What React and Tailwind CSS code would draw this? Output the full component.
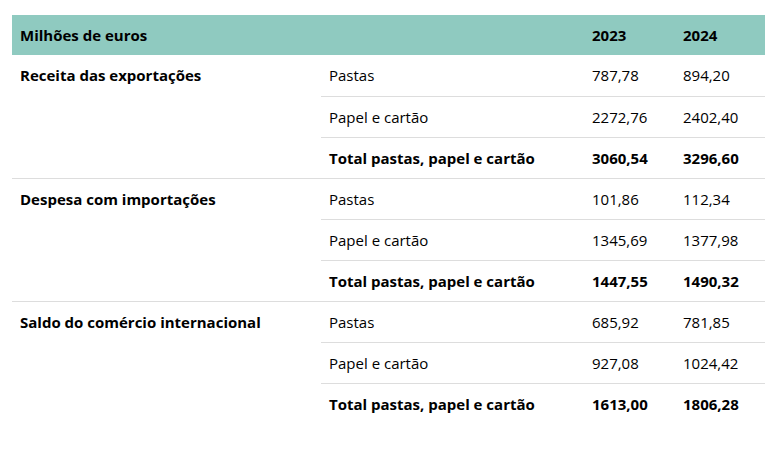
import React from "react";

const groups = [
  {
    label: "Receita das exportações",
    rows: [
      ["Pastas", "787,78", "894,20"],
      ["Papel e cartão", "2272,76", "2402,40"],
      ["Total pastas, papel e cartão", "3060,54", "3296,60"],
    ],
  },
  {
    label: "Despesa com importações",
    rows: [
      ["Pastas", "101,86", "112,34"],
      ["Papel e cartão", "1345,69", "1377,98"],
      ["Total pastas, papel e cartão", "1447,55", "1490,32"],
    ],
  },
  {
    label: "Saldo do comércio internacional",
    rows: [
      ["Pastas", "685,92", "781,85"],
      ["Papel e cartão", "927,08", "1024,42"],
      ["Total pastas, papel e cartão", "1613,00", "1806,28"],
    ],
  },
];

export default function App() {
  return (
    <div
      className="bg-white w-[776px] h-[451px] pt-[15px] pl-[12px] text-black"
      style={{ fontFamily: '"Open Sans", "Noto Sans", sans-serif' }}
    >
      <table className="w-[753px] border-collapse text-[15px] leading-[20px] table-fixed">
        <colgroup>
          <col className="w-[309px]" />
          <col className="w-[263px]" />
          <col className="w-[91px]" />
          <col className="w-[90px]" />
        </colgroup>
        <thead>
          <tr className="bg-[#8fcac0] h-[40px]">
            <th className="text-left font-bold px-2 align-middle">Milhões de euros</th>
            <th></th>
            <th className="text-left font-bold px-2 align-middle">2023</th>
            <th className="text-left font-bold px-2 align-middle">2024</th>
          </tr>
        </thead>
        <tbody>
          {groups.map((g, gi) =>
            g.rows.map((r, ri) => {
              const last = ri === g.rows.length - 1;
              const isLastGroup = gi === groups.length - 1;
              const cellBorder = last
                ? isLastGroup
                  ? ""
                  : "border-b border-[#dddddd]"
                : "border-b border-[#dddddd]";
              const bold = last ? "font-bold" : "font-normal";
              return (
                <tr key={gi + "-" + ri} className="h-[41px]">
                  {ri === 0 && (
                    <td
                      rowSpan={3}
                      className={
                        "align-top px-2 pt-[10px] font-bold " +
                        (isLastGroup ? "" : "border-b border-[#dddddd]")
                      }
                    >
                      {g.label}
                    </td>
                  )}
                  <td className={"px-2 align-middle " + bold + " " + cellBorder}>{r[0]}</td>
                  <td className={"px-2 align-middle " + bold + " " + cellBorder}>{r[1]}</td>
                  <td className={"px-2 align-middle " + bold + " " + cellBorder}>{r[2]}</td>
                </tr>
              );
            })
          )}
        </tbody>
      </table>
    </div>
  );
}
